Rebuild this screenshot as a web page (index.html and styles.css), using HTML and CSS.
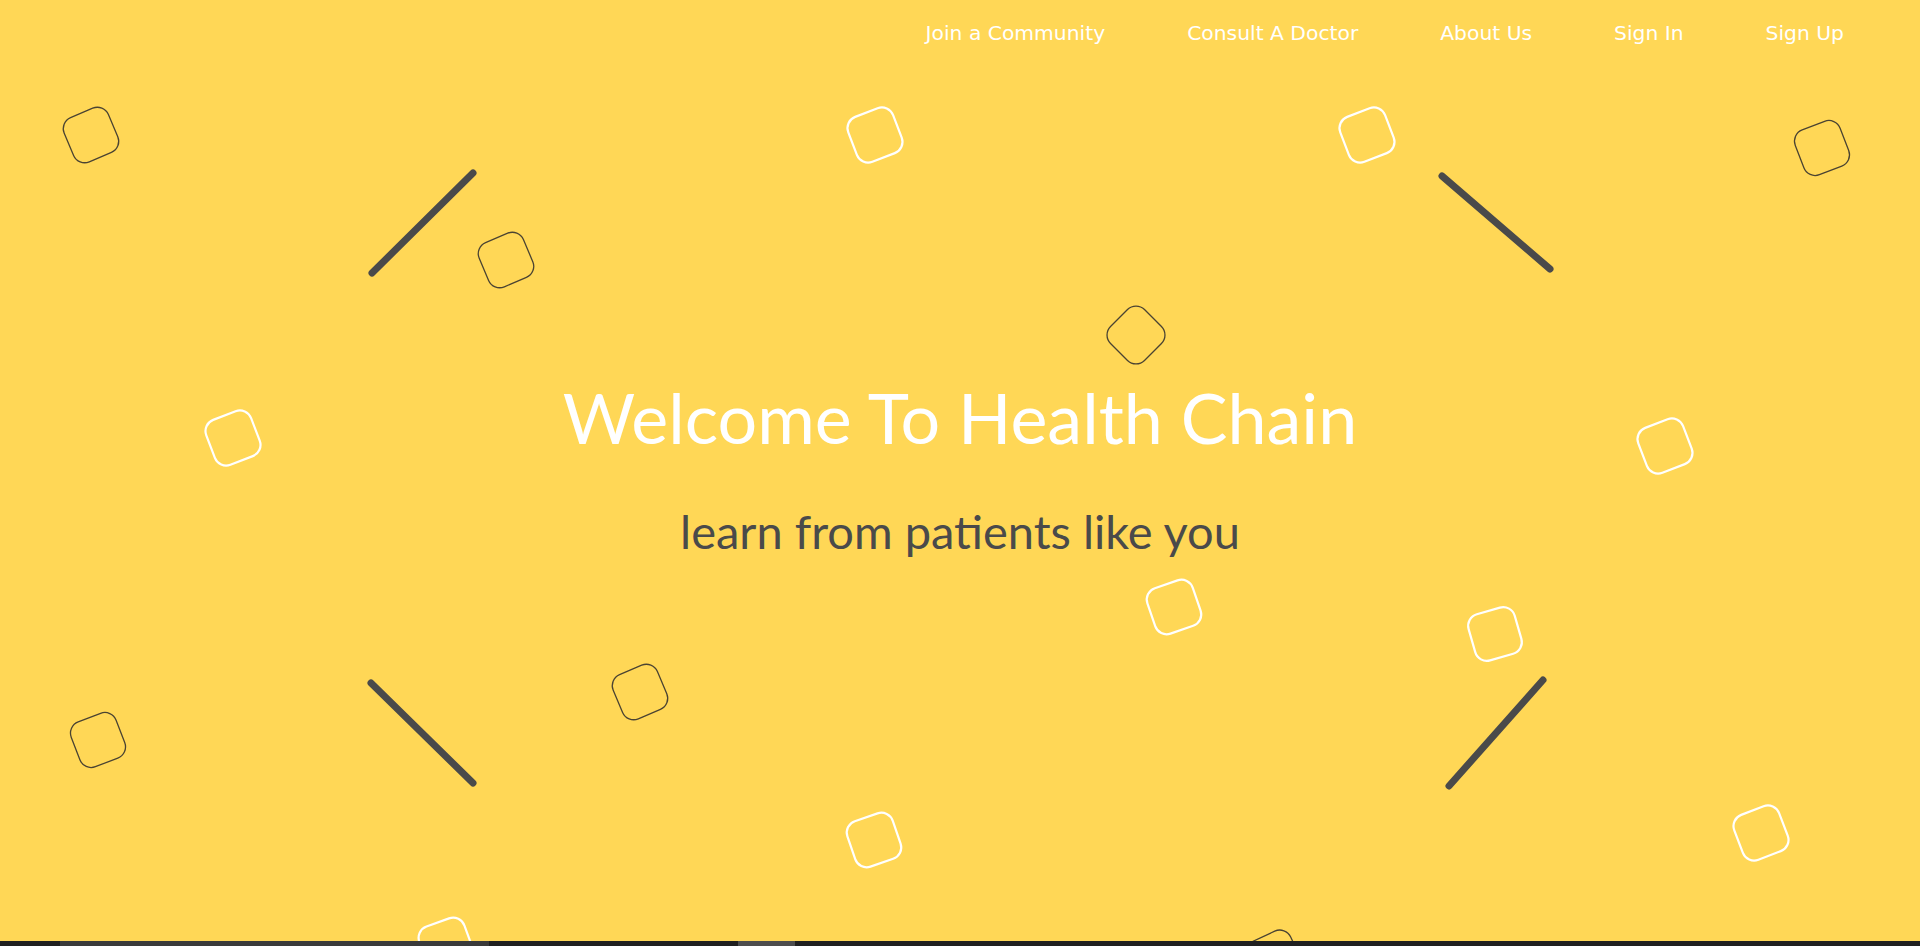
FILE: index.html
```html
<!DOCTYPE html>
<html lang="en">
<head>
<meta charset="utf-8">
<title>Health Chain</title>
<link rel="stylesheet" href="styles.css">
</head>
<body>
<div class="page">
  <section class="hero">
    <svg class="decor" width="1920" height="941" viewBox="0 0 1920 941" aria-hidden="true">
      <g class="bar">
        <line x1="372" y1="273" x2="473" y2="173"/>
        <line x1="1442" y1="176" x2="1550" y2="269"/>
        <line x1="371" y1="683" x2="473" y2="783"/>
        <line x1="1449" y1="786" x2="1543" y2="680"/>
      </g>
      <g class="sq-dark">
        <rect x="-24" y="-24" width="48" height="48" rx="12" transform="translate(91 135) rotate(-23)"/>
        <rect x="-24" y="-24" width="48" height="48" rx="12" transform="translate(1822 148) rotate(-21)"/>
        <rect x="-24" y="-24" width="48" height="48" rx="12" transform="translate(506 260) rotate(-23)"/>
        <rect x="-24" y="-24" width="48" height="48" rx="12" transform="translate(1136 335) rotate(45)"/>
        <rect x="-24" y="-24" width="48" height="48" rx="12" transform="translate(640 692) rotate(-23)"/>
        <rect x="-24" y="-24" width="48" height="48" rx="12" transform="translate(98 740) rotate(-21)"/>
        <rect x="-24" y="-24" width="48" height="48" rx="12" transform="translate(1274 958) rotate(-25)"/>
      </g>
      <g class="sq-light">
        <rect x="-24" y="-24" width="48" height="48" rx="12" transform="translate(875 135) rotate(-21)"/>
        <rect x="-24" y="-24" width="48" height="48" rx="12" transform="translate(1367 135) rotate(-21)"/>
        <rect x="-24" y="-24" width="48" height="48" rx="12" transform="translate(233 438) rotate(-21)"/>
        <rect x="-24" y="-24" width="48" height="48" rx="12" transform="translate(1665 446) rotate(-21)"/>
        <rect x="-24" y="-24" width="48" height="48" rx="12" transform="translate(1174 607) rotate(-19)"/>
        <rect x="-24" y="-24" width="48" height="48" rx="12" transform="translate(1495 634) rotate(-16)"/>
        <rect x="-24" y="-24" width="48" height="48" rx="12" transform="translate(874 840) rotate(-19)"/>
        <rect x="-24" y="-24" width="48" height="48" rx="12" transform="translate(1761 833) rotate(-21)"/>
        <rect x="-24" y="-24" width="48" height="48" rx="12" transform="translate(446 945) rotate(-20)"/>
      </g>
    </svg>
    <nav class="nav">
      <a class="nav-link" href="#">Join a Community</a>
      <a class="nav-link" href="#">Consult A Doctor</a>
      <a class="nav-link" href="#">About Us</a>
      <a class="nav-link" href="#">Sign In</a>
      <a class="nav-link" href="#">Sign Up</a>
    </nav>
    <div class="intro">
      <h1 class="title">Welcome To Health Chain</h1>
      <p class="subtitle">learn from patients like you</p>
    </div>
  </section>
  <div class="strip">
    <span class="strip-a"></span>
    <span class="strip-b"></span>
    <span class="strip-c"></span>
    <span class="strip-d"></span>
    <span class="strip-e"></span>
  </div>
</div>
</body>
</html>
```

FILE: styles.css
```css
* { box-sizing: border-box; }

html, body {
  margin: 0;
  padding: 0;
  height: 100%;
  overflow: hidden;
  background: #ffd756;
}

.page {
  display: flex;
  flex-direction: column;
  height: 946px;
}

.hero {
  position: relative;
  height: 941px;
  background: #ffd756;
  overflow: hidden;
  display: flex;
  flex-direction: column;
}

.decor {
  position: absolute;
  left: 0;
  top: 0;
}

.bar line {
  stroke: #4a4a4a;
  stroke-width: 7;
  stroke-linecap: round;
}

.sq-dark rect {
  fill: none;
  stroke: #4a4332;
  stroke-width: 1.3;
}

.sq-light rect {
  fill: none;
  stroke: #ffffff;
  stroke-width: 2.2;
}

.nav {
  position: relative;
  display: flex;
  justify-content: flex-end;
  gap: 82px;
  padding: 21px 76px 0 0;
}

.nav-link {
  font-family: "DejaVu Sans", Verdana, sans-serif;
  font-size: 20.3px;
  color: #ffffff;
  text-decoration: none;
}

.intro {
  position: relative;
  display: flex;
  flex-direction: column;
  align-items: center;
}

.title {
  margin: 330px 0 0;
  font-family: "Lato", "Noto Sans", sans-serif;
  font-weight: 400;
  font-size: 70px;
  line-height: 1.2;
  color: #ffffff;
}

.subtitle {
  margin: 44px 0 0;
  font-family: "Lato", "Noto Sans", sans-serif;
  font-weight: 400;
  font-size: 47px;
  line-height: 1.2;
  color: #4a4a4a;
}

.strip {
  display: flex;
  height: 5px;
  background: #202020;
}

.strip span { display: block; height: 100%; }
.strip-a { width: 60px; }
.strip-b { width: 429px; background: #3a3a3a; }
.strip-c { width: 249px; }
.strip-d { width: 57px; background: #4d4d4d; }
.strip-e { flex: 1; }
```
